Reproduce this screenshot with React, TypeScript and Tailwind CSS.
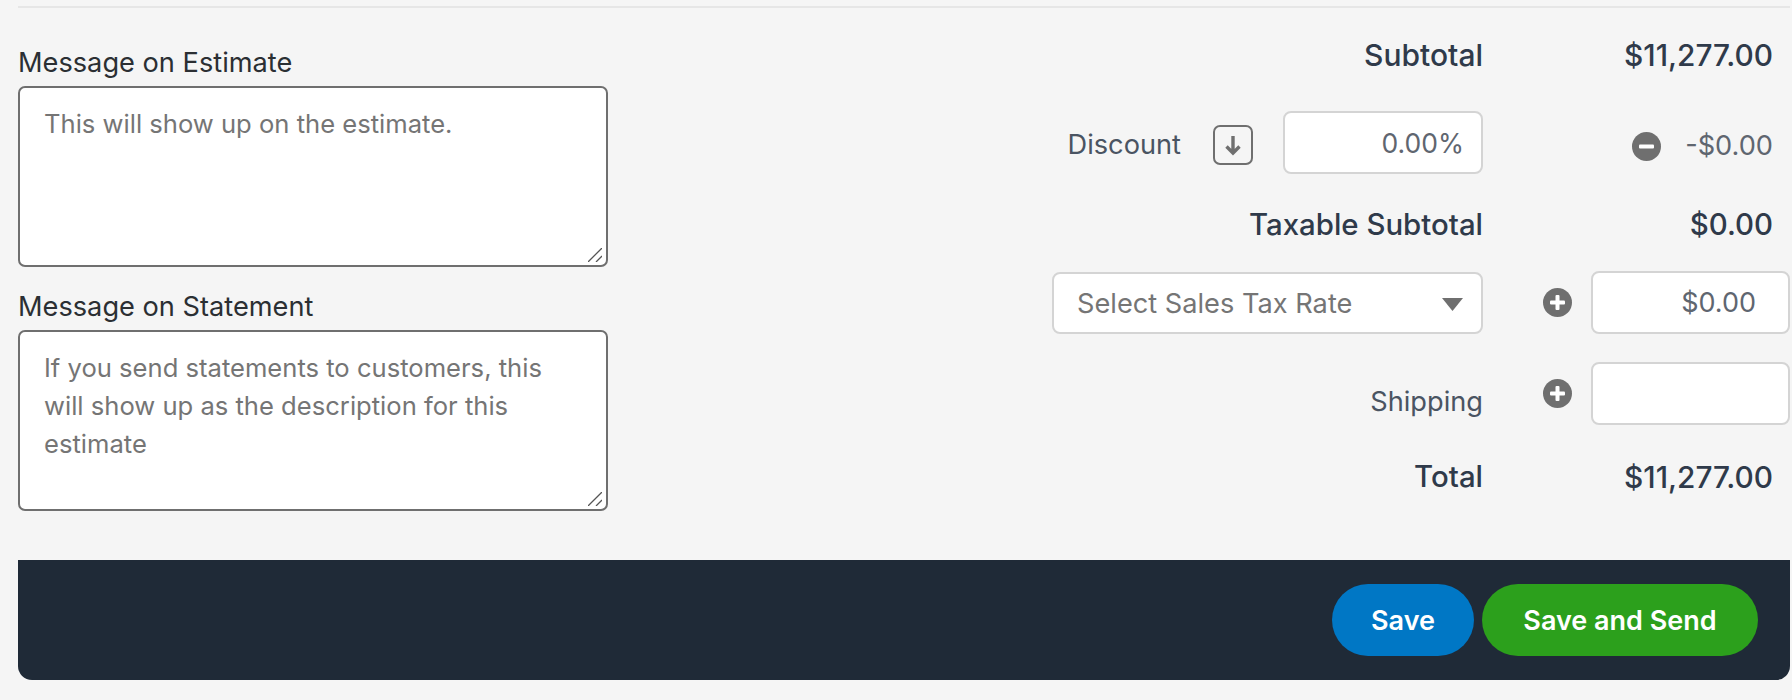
function CircleIcon({ minus = false }: { minus?: boolean }) {
  return (
    <svg width="29" height="29" viewBox="0 0 29 29" className="shrink-0">
      <circle cx="14.5" cy="14.5" r="14.5" fill="#6f6f6f" />
      <rect x="7" y="12.5" width="15" height="4" rx="1" fill="#fff" />
      {!minus && <rect x="12.5" y="7" width="4" height="15" rx="1" fill="#fff" />}
    </svg>
  )
}

function MessageBox({ placeholder }: { placeholder: string }) {
  return (
    <div className="relative h-[181px] w-full">
      <textarea
        placeholder={placeholder}
        className="block h-full w-full resize-none rounded-[7px] border-2 border-[#6f6f6f] bg-white px-[24px] py-[17px] text-[25.6px] leading-[38px] text-[#333] outline-none placeholder:text-[#757575]"
      />
      {/* resize grip */}
      <svg width="14" height="14" viewBox="0 0 14 14" className="pointer-events-none absolute bottom-[5px] right-[6px]" stroke="#555" strokeWidth="1.3">
        <path d="M0 14L14 0M8 14l6-6" />
      </svg>
    </div>
  )
}

const inputCls =
  'h-[63px] w-full rounded-[8px] border-2 border-[#d4d4d4] bg-white text-right text-[#5f6670] outline-none'

export default function App() {
  return (
    <div className="h-[700px] w-[1792px] overflow-hidden bg-[#f5f5f5] pl-[18px] pr-[2px] pt-[6px] font-['Inter',sans-serif]">
      <div className="h-[2px] bg-[#e6e6e6]" />

      <div className="flex h-[552px] justify-between">
        {/* Messages */}
        <div className="flex w-[590px] flex-col pt-[38px]">
          <label className="mb-[7px] text-[27.2px] leading-[33px] text-[#2b2f33]">Message on Estimate</label>
          <MessageBox placeholder="This will show up on the estimate." />
          <label className="mb-[7px] mt-[23px] text-[27.2px] leading-[33px] text-[#2b2f33]">Message on Statement</label>
          <MessageBox placeholder="If you send statements to customers, this will show up as the description for this estimate" />
        </div>

        {/* Totals */}
        <div className="flex w-[738px] flex-col pt-[28px] text-[27.2px] text-[#2f3a4a]">
          <div className="grid h-[38px] grid-cols-[431px_108px_199px] items-center leading-[38px]">
            <div className="text-right text-[30px] font-[550]">Subtotal</div>
            <div />
            <div className="pr-[17px] text-right text-[29.8px] font-[550]">$11,277.00</div>
          </div>

          <div className="mt-[37px] grid h-[62px] grid-cols-[431px_108px_199px] items-center">
            <div className="flex items-center justify-end">
              <span className="mt-[6px] text-[#4a5462]">Discount</span>
              <button className="ml-[32px] mt-[4px] flex h-[40px] w-[40px] items-center justify-center rounded-[7px] border-2 border-[#6f6f6f]">
                <svg width="22" height="24" viewBox="0 0 22 24" fill="none" stroke="#6f6f6f" strokeWidth="3.4">
                  <path d="M11 3v17M4.5 13.5L11 20l6.5-6.5" />
                </svg>
              </button>
              <input defaultValue="0.00%" className={`${inputCls} ml-[30px] !w-[200px] px-[17px] text-[26.5px]`} />
            </div>
            <div />
            <div className="mt-[8px] flex items-center justify-end gap-[24px] pr-[17px] text-[#5f6670]">
              <CircleIcon minus />
              <span>-$0.00</span>
            </div>
          </div>

          <div className="mt-[33px] grid h-[38px] grid-cols-[431px_108px_199px] items-center leading-[38px]">
            <div className="text-right text-[29.4px] font-[550]">Taxable Subtotal</div>
            <div />
            <div className="pr-[17px] text-right text-[29.4px] font-[550]">$0.00</div>
          </div>

          <div className="mt-[27px] grid h-[63px] grid-cols-[431px_108px_199px] items-center">
            <div className="relative mt-px h-[62px]">
              <select className="h-full w-full appearance-none rounded-[8px] border-2 border-[#d4d4d4] bg-white pl-[23px] pt-[2px] text-[#757575] outline-none">
                <option>Select Sales Tax Rate</option>
              </select>
              <svg width="21" height="13" viewBox="0 0 21 13" className="pointer-events-none absolute right-[20px] top-[26px]">
                <path d="M0 0h21L10.5 13z" fill="#6f6f6f" />
              </svg>
            </div>
            <div className="flex justify-end pr-[19px]">
              <CircleIcon />
            </div>
            <input defaultValue="$0.00" className={`${inputCls} px-[32px] text-[27px]`} />
          </div>

          <div className="mt-[28px] grid h-[63px] grid-cols-[431px_108px_199px] items-center">
            <div className="mt-[18px] text-right text-[#4a5462]">Shipping</div>
            <div className="flex justify-end pr-[19px]">
              <CircleIcon />
            </div>
            <input className={`${inputCls} px-[15px] text-[27px]`} />
          </div>

          <div className="mt-[33px] grid h-[38px] grid-cols-[431px_108px_199px] items-center leading-[38px]">
            <div className="text-right text-[29.4px] font-[550]">Total</div>
            <div />
            <div className="pr-[17px] text-right text-[29.8px] font-[550]">$11,277.00</div>
          </div>
        </div>
      </div>

      {/* Footer bar */}
      <div className="flex h-[120px] items-center justify-end gap-[8px] rounded-b-[14px] bg-[#1f2a37] pr-[32px]">
        <button className="h-[72px] w-[142px] rounded-full bg-[#0077c5] pt-[2px] text-[27px] font-semibold text-white">Save</button>
        <button className="h-[72px] w-[276px] rounded-full bg-[#2ca01c] pt-[2px] text-[27px] font-semibold text-white">Save and Send</button>
      </div>
    </div>
  )
}
